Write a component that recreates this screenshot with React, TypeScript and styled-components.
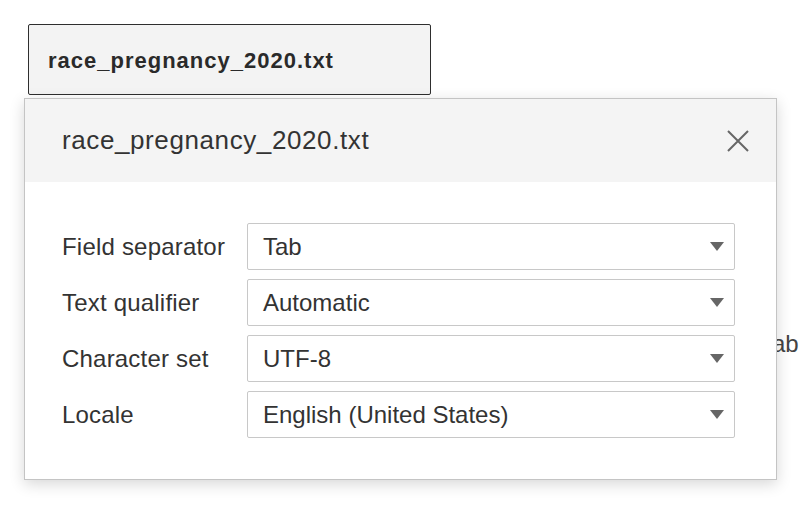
import React from "react";
import styled, { createGlobalStyle } from "styled-components";

const GlobalStyle = createGlobalStyle`
  html, body {
    margin: 0;
    padding: 0;
    background: #ffffff;
    overflow: hidden;
    width: 802px;
    height: 506px;
  }
  body {
    font-family: "Liberation Sans", Arial, sans-serif;
    color: #333333;
  }
`;

const Page = styled.div`
  position: relative;
  width: 802px;
  height: 506px;
  padding: 24px 0 0 24px;
  box-sizing: border-box;
  display: flex;
  flex-direction: column;
  align-items: flex-start;
`;

const BackgroundText = styled.div`
  position: absolute;
  left: 760px;
  top: 330px;
  font-size: 24px;
  color: #444;
  white-space: nowrap;
`;

const TabButton = styled.div`
  margin-left: 4px;
  width: 403px;
  height: 71px;
  box-sizing: border-box;
  border: 1.5px solid #2e2e2e;
  border-radius: 2px;
  background: #f3f3f3;
  display: flex;
  align-items: center;
  padding: 2px 0 0 19px;
  font-size: 22px;
  letter-spacing: 1px;
  font-weight: 700;
  color: #2a2a2a;
`;

const Dialog = styled.div`
  position: relative;
  z-index: 1;
  margin-top: 3px;
  width: 753px;
  box-sizing: border-box;
  border: 1.5px solid #c4c4c4;
  background: #ffffff;
  box-shadow: 0 4px 14px rgba(0, 0, 0, 0.16);
  display: flex;
  flex-direction: column;
`;

const Header = styled.div`
  height: 83px;
  background: #f4f4f4;
  display: flex;
  align-items: center;
  justify-content: space-between;
  padding: 0 26px 0 37px;
`;

const Title = styled.div`
  font-size: 26px;
  letter-spacing: 0.6px;
  color: #333333;
`;

const CloseButton = styled.button`
  border: none;
  background: transparent;
  padding: 0;
  width: 24px;
  height: 24px;
  display: flex;
  align-items: center;
  justify-content: center;
  cursor: pointer;
`;

const Body = styled.div`
  padding: 41px 41px 41px 37px;
  display: grid;
  grid-template-columns: 185px 1fr;
  row-gap: 9px;
  align-items: center;
`;

const Label = styled.div`
  font-size: 24px;
  letter-spacing: 0.2px;
  color: #333333;
`;

const Select = styled.div`
  height: 47px;
  box-sizing: border-box;
  border: 1px solid #c8c8c8;
  border-radius: 2px;
  display: flex;
  align-items: center;
  justify-content: space-between;
  padding: 0 10px 0 15px;
  font-size: 24px;
  color: #333333;
`;

const Arrow = styled.span`
  width: 0;
  height: 0;
  border-left: 7.5px solid transparent;
  border-right: 7.5px solid transparent;
  border-top: 9px solid #666666;
`;

const rows: [string, string][] = [
  ["Field separator", "Tab"],
  ["Text qualifier", "Automatic"],
  ["Character set", "UTF-8"],
  ["Locale", "English (United States)"],
];

export default function App() {
  return (
    <>
      <GlobalStyle />
      <Page>
        <BackgroundText>Tab</BackgroundText>
        <TabButton>race_pregnancy_2020.txt</TabButton>
        <Dialog>
          <Header>
            <Title>race_pregnancy_2020.txt</Title>
            <CloseButton aria-label="Close">
              <svg width="22" height="22" viewBox="0 0 22 22">
                <path d="M1 1 L21 21 M21 1 L1 21" stroke="#666" strokeWidth="2" fill="none" />
              </svg>
            </CloseButton>
          </Header>
          <Body>
            {rows.map(([label, value]) => (
              <React.Fragment key={label}>
                <Label>{label}</Label>
                <Select>
                  <span>{value}</span>
                  <Arrow />
                </Select>
              </React.Fragment>
            ))}
          </Body>
        </Dialog>
      </Page>
    </>
  );
}
